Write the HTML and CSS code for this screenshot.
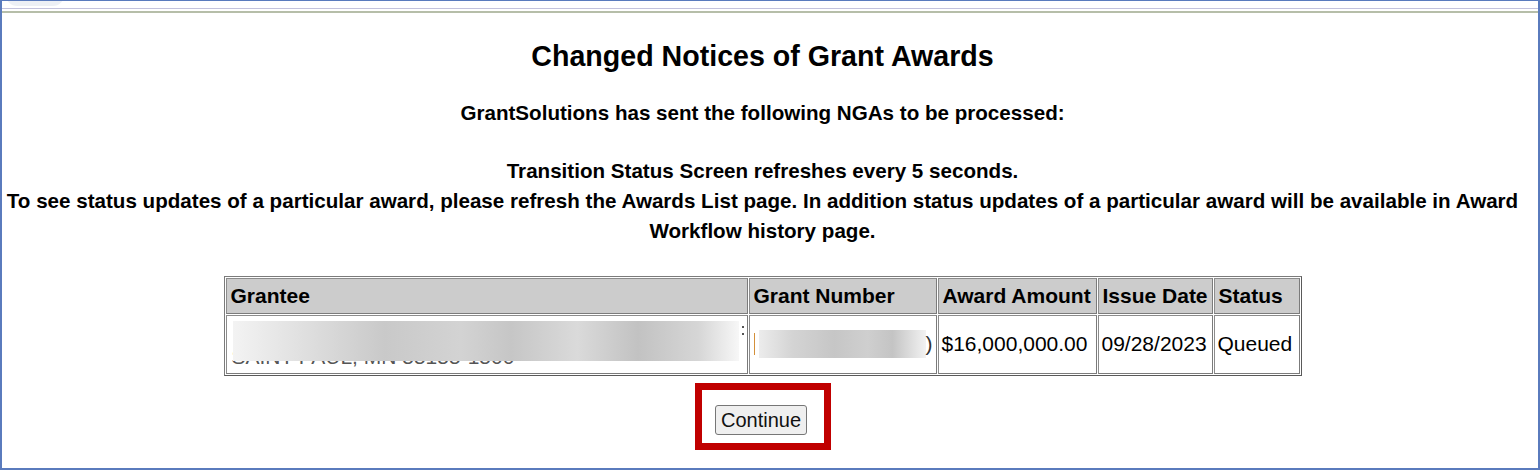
FILE: index.html
```html
<!DOCTYPE html>
<html>
<head>
<meta charset="utf-8">
<title>Changed Notices of Grant Awards</title>
<link rel="stylesheet" href="styles.css">
</head>
<body>
<div class="frame">
  <div class="tab-ghost"></div>
  <div class="topbar">
    <div class="line-lav"></div>
    <div class="line-green"></div>
  </div>
  <div class="content">
    <h1 class="title">Changed Notices of Grant Awards</h1>
    <p class="msg">GrantSolutions has sent the following NGAs to be processed:</p>
    <p class="msg info">Transition Status Screen refreshes every 5 seconds.<br>To see status updates of a particular award, please refresh the Awards List page. In addition status updates of a particular award will be available in Award Workflow history page.</p>
    <table class="awards">
      <colgroup>
        <col class="c-grantee">
        <col class="c-number">
        <col class="c-amount">
        <col class="c-date">
        <col class="c-status">
      </colgroup>
      <thead>
        <tr>
          <th>Grantee</th>
          <th>Grant Number</th>
          <th>Award Amount</th>
          <th>Issue Date</th>
          <th>Status</th>
        </tr>
      </thead>
      <tbody>
        <tr>
          <td class="grantee">
            <div class="grantee-box">
              <span class="colon c1"></span>
              <span class="colon c2"></span>
              <div class="addr">SAINT PAUL, MN 55155-1500</div>
              <div class="blur blur-grantee"></div>
            </div>
          </td>
          <td class="number">
            <div class="number-box">
              <span class="orange-bar"></span>
              <span class="blur blur-number"></span>
              <span class="tail">)</span>
            </div>
          </td>
          <td>$16,000,000.00</td>
          <td>09/28/2023</td>
          <td>Queued</td>
        </tr>
      </tbody>
    </table>
    <div class="btn-row">
      <div class="highlight">
        <button class="btn" type="button">Continue</button>
      </div>
    </div>
  </div>
</div>
</body>
</html>
```
FILE: styles.css
```css
html, body {
  margin: 0;
  padding: 0;
  background: #ffffff;
}

body {
  font-family: "Liberation Sans", Arial, sans-serif;
  color: #000;
}

.frame {
  position: relative;
  width: 1540px;
  height: 470px;
  box-sizing: border-box;
  border-top: 1px solid #5a7bbd;
  border-left: 2px solid #5a7bbd;
  border-right: 2px solid #5a7bbd;
  border-bottom: 2px solid #5a7bbd;
  overflow: hidden;
}

.tab-ghost {
  position: absolute;
  left: 4px;
  top: -6px;
  width: 58px;
  height: 11px;
  border-radius: 0 0 20px 20px;
  background: #e9ecf2;
  opacity: 0.8;
}

.topbar {
  padding-top: 7px;
}

.line-lav {
  height: 1px;
  background: #c3c3dd;
}

.line-green {
  height: 2px;
  margin-top: 2px;
  background: #b6bea9;
}

.content {
  padding-right: 15px;
  text-align: center;
}

.title {
  margin: 27px 0 0;
  font-size: 28.6px;
  line-height: 32px;
  font-weight: bold;
}

.msg {
  margin: 26px 0 0;
  font-size: 20.6px;
  line-height: 30px;
  font-weight: bold;
}

.msg.info {
  margin-top: 28px;
}

.awards {
  margin: 30px auto 0;
  width: 1078px;
  table-layout: fixed;
  border-collapse: separate;
  border-spacing: 1px;
  border: 1px solid #7b7b7b;
  border-right-color: #5a5a5a;
  border-bottom-color: #5a5a5a;
  text-align: left;
  font-size: 21px;
}

.c-grantee { width: 522px; }
.c-number { width: 188px; }
.c-amount { width: 159px; }
.c-date { width: 115px; }
.c-status { width: 86px; }

.awards th,
.awards td {
  box-sizing: border-box;
  border: 1px solid #7b7b7b;
  border-top-color: #8c8c8c;
  border-left-color: #8c8c8c;
  padding: 0 3px;
  white-space: nowrap;
}

.awards th {
  height: 36px;
  background: #cccccc;
  font-weight: bold;
  font-size: 21px;
  padding-left: 4px;
}

.awards td {
  height: 59px;
  vertical-align: middle;
  font-size: 21px;
  padding-bottom: 2px;
}

.grantee-box {
  position: relative;
  height: 55px;
  overflow: hidden;
}

.addr {
  position: absolute;
  left: 2px;
  top: 29px;
  color: #555;
  font-size: 21px;
}

.blur {
  display: block;
}

.blur-grantee {
  position: absolute;
  left: 3px;
  top: 5px;
  width: 506px;
  height: 40px;
  background: linear-gradient(90deg, #f3f3f3 0%, #dedede 15%, #c9c9c9 30%, #d3d3d3 45%, #c6c6c6 55%, #dadada 68%, #c2c2c2 80%, #d6d6d6 92%, #f7f7f7 100%);
}

.colon {
  position: absolute;
  left: 512px;
  width: 2px;
  height: 2px;
  background: #555;
}

.c1 { top: 10px; }
.c2 { top: 17px; }

.number-box {
  display: flex;
  align-items: center;
  height: 55px;
}

.orange-bar {
  width: 2px;
  height: 22px;
  margin-left: 1px;
  background: #d4903a;
}

.blur-number {
  width: 168px;
  height: 28px;
  margin-left: 4px;
  background: linear-gradient(90deg, #ececec 0%, #d4d4d4 20%, #c6c6c6 45%, #cfcfcf 65%, #c4c4c4 80%, #f2f2f2 100%);
}

.tail {
  margin-left: 0;
  color: #333;
}

.btn-row {
  margin-top: 7px;
  display: flex;
  justify-content: center;
  padding-left: 1px;
}

.highlight {
  width: 136px;
  height: 67px;
  box-sizing: border-box;
  border: 7px solid #c00000;
  padding: 15px 17px 8px 13px;
  background: #fff;
}

.btn {
  display: block;
  width: 92px;
  height: 30px;
  margin: 0;
  padding: 0;
  box-sizing: border-box;
  font-family: "Liberation Sans", Arial, sans-serif;
  font-size: 20px;
  color: #111;
  background: #efefef;
  border: 1px solid #767676;
  border-radius: 3px;
}
```
